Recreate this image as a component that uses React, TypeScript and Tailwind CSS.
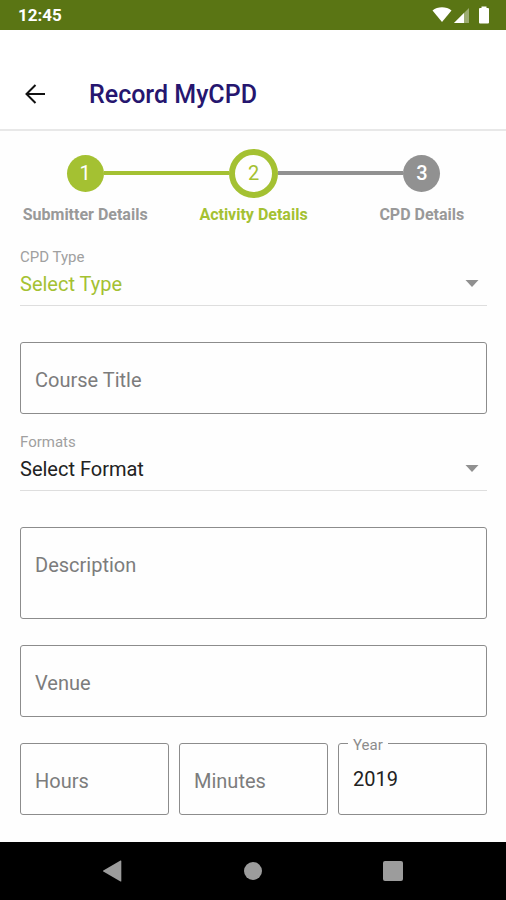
import type { ReactNode } from "react";

function StatusBar() {
  return (
    <div className="flex h-[30px] items-center justify-between bg-[#5a7514] pr-4 pl-[18px] text-white">
      <span className="text-[17px] leading-8 font-bold">12:45</span>
      <div className="flex items-center">
        <svg width="20" height="16" viewBox="0 0 20 16" fill="currentColor" aria-hidden="true">
          <path d="M.5 3.4C5.600-.7 14.400-.7 19.500 3.400L10 15z" />
        </svg>
        <svg className="ml-0.5" width="16" height="16" viewBox="0 0 16 16" fill="currentColor" aria-hidden="true">
          <path d="M15 1v15H0z" opacity=".4" />
          <path d="M10 6v10H0z" />
        </svg>
        <svg className="ml-2" width="12" height="18" viewBox="0 0 12 18" fill="currentColor" aria-hidden="true">
          <path d="M3.500.5h5v1.500H10q1 0 1 1v13.500q0 1-1 1H2q-1 0-1-1V3q0-1 1-1h1.500z" />
        </svg>
      </div>
    </div>
  );
}

function Header() {
  return (
    <header className="flex h-[101px] items-end border-b-2 border-[#e8e8e8] pb-4 pl-5">
      <button type="button" aria-label="Back" className="flex h-9 w-[30px] items-center justify-center pb-0.5 text-[#111]">
        <svg width="20" height="20" viewBox="0 0 20 20" fill="none" stroke="currentColor" strokeWidth="2" aria-hidden="true">
          <path d="M20 10H2M10.500 1L1.500 10l9 9" />
        </svg>
      </button>
      <h1 className="ml-[39px] text-[25px] leading-9 font-medium text-[#26166f]">Record MyCPD</h1>
    </header>
  );
}

function Step({ label, labelColor, left, right, children }: {
  label: string;
  labelColor: string;
  left: string;
  right: string;
  children: ReactNode;
}) {
  return (
    <li className="flex flex-col items-center">
      <div className="flex h-[50px] w-full items-center">
        <span className={`h-1 flex-1 ${left}`} />
        {children}
        <span className={`h-1 flex-1 ${right}`} />
      </div>
      <span className={`mt-[7px] text-[16px] leading-5 font-bold ${labelColor}`}>{label}</span>
    </li>
  );
}

function Stepper() {
  return (
    <ol className="grid grid-cols-3 pt-[17px] pl-px">
      <Step label="Submitter Details" labelColor="text-[#999]" left="bg-transparent" right="bg-[#a4c132]">
        <span className="flex size-[37px] items-center justify-center rounded-full bg-[#a4c132] text-[20px] text-white">1</span>
      </Step>
      <Step label="Activity Details" labelColor="text-[#a4c132]" left="bg-[#a4c132]" right="bg-[#919191]">
        <span className="flex size-[49px] items-center justify-center rounded-full border-6 border-[#a4c132] text-[20px] text-[#a4c132]">2</span>
      </Step>
      <Step label="CPD Details" labelColor="text-[#999]" left="bg-[#919191]" right="bg-transparent">
        <span className="flex size-[37px] items-center justify-center rounded-full bg-[#919191] text-[20px] font-medium text-white">3</span>
      </Step>
    </ol>
  );
}

function SelectField({ id, label, value, color }: { id: string; label: string; value: string; color: string }) {
  return (
    <div className="border-b border-[#dedede]">
      <label htmlFor={id} className="block text-[15px] leading-4 text-[#a0a0a0]">{label}</label>
      <div className="grid items-center">
        <select
          id={id}
          className={`col-start-1 row-start-1 mt-[5px] mb-[7px] h-7 w-full appearance-none bg-transparent text-[20px] leading-7 outline-none ${color}`}
        >
          <option>{value}</option>
        </select>
        <svg
          className="pointer-events-none col-start-1 row-start-1 mr-2 mb-1 justify-self-end text-[#909090]"
          width="14"
          height="7"
          viewBox="0 0 14 7"
          fill="currentColor"
          aria-hidden="true"
        >
          <path d="M.5 0h13L7 7z" />
        </svg>
      </div>
    </div>
  );
}

function TextField({ label }: { label: string }) {
  return (
    <input
      type="text"
      aria-label={label}
      placeholder={label}
      className="block h-[72px] w-full min-w-0 rounded-[3px] border border-[#8c8c8c] px-3.5 pt-1 text-[20px] text-[#222] outline-none placeholder:text-[#7c7c7c]"
    />
  );
}

function NavBar() {
  return (
    <nav className="grid h-[58px] grid-cols-3 items-center justify-items-center bg-black px-[43px] text-[#9c9c9c]">
      <button type="button" aria-label="Back">
        <svg width="20" height="22" viewBox="0 0 20 22" fill="currentColor" aria-hidden="true">
          <path d="M17.500.5q.8-.4.8.6v19.800q0 1-.8.6L.3 11.600q-.8-.6 0-1.200z" />
        </svg>
      </button>
      <button type="button" aria-label="Home" className="size-[18px] rounded-full bg-[#9c9c9c]" />
      <button type="button" aria-label="Recent apps" className="size-5 rounded-[2px] bg-[#9c9c9c]" />
    </nav>
  );
}

export default function App() {
  return (
    <div className="flex min-h-screen flex-col bg-white font-['Roboto',sans-serif]">
      <StatusBar />
      <Header />
      <main className="flex-1 bg-[#fefefe] pb-[26px]">
        <Stepper />
        <form className="pt-6 pr-[19px] pl-5">
          <SelectField id="cpd-type" label="CPD Type" value="Select Type" color="text-[#a4c132]" />
          <div className="mt-9 mb-5">
            <TextField label="Course Title" />
          </div>
          <SelectField id="formats" label="Formats" value="Select Format" color="text-[#222]" />
          <textarea
            aria-label="Description"
            placeholder="Description"
            className="mt-9 block h-[92px] w-full resize-none rounded-[3px] border border-[#8c8c8c] px-3.5 pt-[23px] text-[20px] leading-7 text-[#222] outline-none placeholder:text-[#7c7c7c]"
          />
          <div className="mt-[26px]">
            <TextField label="Venue" />
          </div>
          <div className="mt-[26px] grid grid-cols-3 gap-2.5">
            <TextField label="Hours" />
            <TextField label="Minutes" />
            <div className="relative">
              <label htmlFor="year" className="absolute -top-2 left-2.5 bg-[#fefefe] px-[5px] text-[15px] leading-5 text-[#8c8c8c]">Year</label>
              <input
                id="year"
                type="text"
                defaultValue="2019"
                className="block h-[72px] w-full min-w-0 rounded-[3px] border border-[#8c8c8c] px-3.5 text-[20px] text-[#222] outline-none"
              />
            </div>
          </div>
        </form>
      </main>
      <NavBar />
    </div>
  );
}
